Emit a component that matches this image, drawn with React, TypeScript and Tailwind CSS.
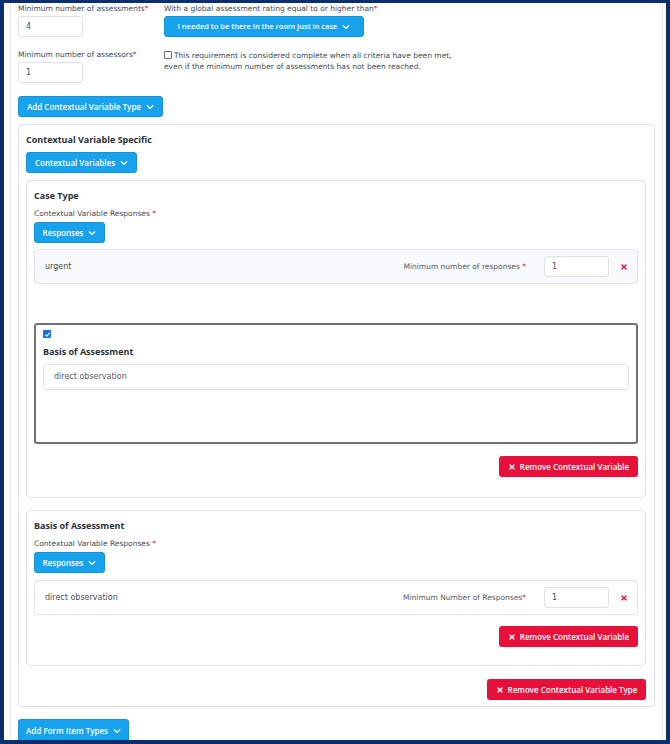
import { FaChevronDown, FaTimes } from 'react-icons/fa';

const font = { fontFamily: '"DejaVu Sans", "Liberation Sans", sans-serif' };
const boldFont = { fontFamily: '"Open Sans", "DejaVu Sans", sans-serif' };

function BlueButton({ label, className = '' }: { label: string; className?: string }) {
  return (
    <button
      type="button"
      style={boldFont}
      className={`flex items-center justify-center gap-[5px] whitespace-nowrap h-[21px] rounded-[3px] bg-[#17a2ee] border border-[#1592d6] text-white font-semibold ${className}`}
    >
      {label}
      <FaChevronDown className="size-[8px] shrink-0" />
    </button>
  );
}

function RedButton({ label, className = '' }: { label: string; className?: string }) {
  return (
    <button
      type="button"
      style={boldFont}
      className={`flex items-center justify-center gap-[4px] whitespace-nowrap h-[21px] rounded-[3px] bg-[#e8103a] text-white text-[8px] font-semibold ${className}`}
    >
      <FaTimes className="size-[8px] shrink-0" />
      {label}
    </button>
  );
}

function Req() {
  return <span className="text-[#e8103a]">*</span>;
}

function Heading({ children, className = '' }: { children: React.ReactNode; className?: string }) {
  return (
    <div style={boldFont} className={`text-[9px] font-bold text-[#2b3036] leading-[12px] ${className}`}>
      {children}
    </div>
  );
}

function SmallInput({ value, className = '' }: { value: string; className?: string }) {
  return (
    <div
      className={`flex items-center h-[21px] w-[65px] px-[7px] rounded-[3px] border border-[#dee2e6] bg-white text-[8px] text-[#495057] ${className}`}
    >
      {value}
    </div>
  );
}

function ResponseRow({ name, label, tinted }: { name: string; label: React.ReactNode; tinted?: boolean }) {
  return (
    <div
      className={`flex items-center h-[35px] pl-[10px] pr-[9px] rounded-[3px] border border-[#dfe3e8] ${tinted ? 'bg-[#f8f9fb]' : 'bg-white'}`}
    >
      <span className="text-[8px] text-[#495057] flex-1">{name}</span>
      <span className="text-[7.5px] text-[#555c63] mr-[18px]">{label}</span>
      <SmallInput value="1" />
      <FaTimes className="size-[8px] text-[#e8103a] ml-[11px]" />
    </div>
  );
}

export default function App() {
  return (
    <div style={font} className="w-[670px] h-[744px] overflow-hidden bg-[#0b2f6e] pt-[3px] px-[4px] pb-[4px]">
      <div className="h-full bg-white pl-[6px] pr-[3px] overflow-hidden">
        <div className="h-full border-x border-[#e3e6ea] pl-[7px] pr-[7px] text-[#444b52]">
          {/* Top form fields */}
          <div className="flex">
            <div className="w-[146px] shrink-0">
              <div className="text-[7.5px] leading-[12px] h-[12px]">
                Minimum number of assessments<Req />
              </div>
              <SmallInput value="4" className="mt-[1px]" />
              <div className="text-[7.5px] leading-[12px] mt-[12px]">
                Minimum number of assessors<Req />
              </div>
              <SmallInput value="1" className="mt-[1px]" />
            </div>
            <div>
              <div className="text-[7.5px] leading-[12px] h-[12px]">
                With a global assessment rating equal to or higher than<Req />
              </div>
              <BlueButton
                label="I needed to be there in the room just in case"
                className="mt-[1px] w-[200px] text-[7.5px]"
              />
              <div className="mt-[13px] text-[7.5px] leading-[11px]">
                <span className="inline-block align-[-1px] size-[8px] border border-[#666] rounded-[1px] mr-[2px] bg-white" />
                This requirement is considered complete when all criteria have been met,
                <br />
                even if the minimum number of assessments has not been reached.
              </div>
            </div>
          </div>

          <BlueButton label="Add Contextual Variable Type" className="mt-[13px] w-[145px] text-[8px]" />

          {/* Outer card */}
          <div className="mt-[7px] border border-[#dfe3e8] rounded-[3px] pl-[7px] pr-[8px] pt-[9px] pb-[6px]">
            <Heading>Contextual Variable Specific</Heading>
            <BlueButton label="Contextual Variables" className="mt-[6px] w-[111px] text-[8px]" />

            {/* Case Type card */}
            <div className="mt-[7px] border border-[#dfe3e8] rounded-[3px] px-[7px] pt-[9px] pb-[20px]">
              <Heading>Case Type</Heading>
              <div className="text-[7.5px] leading-[12px] mt-[6px]">
                Contextual Variable Responses <Req />
              </div>
              <BlueButton label="Responses" className="mt-[2px] w-[71px] text-[8px]" />
              <div className="mt-[6px]">
                <ResponseRow name="urgent" tinted label={<>Minimum number of responses <Req /></>} />
              </div>

              <div className="mt-[39px] h-[121px] border-2 border-[#737373] rounded-[3px] px-[7px] pt-[5px]">
                <div className="flex items-center justify-center size-[8px] rounded-[1px] bg-[#1673e6]">
                  <svg viewBox="0 0 10 10" className="size-[7px]">
                    <path d="M2 5.2 L4.2 7.3 L8 2.8" fill="none" stroke="white" strokeWidth="1.6" />
                  </svg>
                </div>
                <Heading className="mt-[8px]">Basis of Assessment</Heading>
                <div className="mt-[6px] flex items-center h-[26px] px-[10px] rounded-[3px] border border-[#dfe3e8] text-[8px] text-[#555c63]">
                  direct observation
                </div>
              </div>

              <div className="flex justify-end mt-[12px]">
                <RedButton label="Remove Contextual Variable" className="w-[139px]" />
              </div>
            </div>

            {/* Basis of Assessment card */}
            <div className="mt-[12px] border border-[#dfe3e8] rounded-[3px] px-[7px] pt-[9px] pb-[18px]">
              <Heading>Basis of Assessment</Heading>
              <div className="text-[7.5px] leading-[12px] mt-[6px]">
                Contextual Variable Responses <Req />
              </div>
              <BlueButton label="Responses" className="mt-[2px] w-[71px] text-[8px]" />
              <div className="mt-[7px]">
                <ResponseRow name="direct observation" label={<>Minimum Number of Responses<Req /></>} />
              </div>
              <div className="flex justify-end mt-[11px]">
                <RedButton label="Remove Contextual Variable" className="w-[139px]" />
              </div>
            </div>

            <div className="flex justify-end mt-[13px]">
              <RedButton label="Remove Contextual Variable Type" className="w-[159px]" />
            </div>
          </div>

          <BlueButton label="Add Form Item Types" className="mt-[12px] w-[111px] h-[24px] text-[8px]" />
        </div>
      </div>
    </div>
  );
}
